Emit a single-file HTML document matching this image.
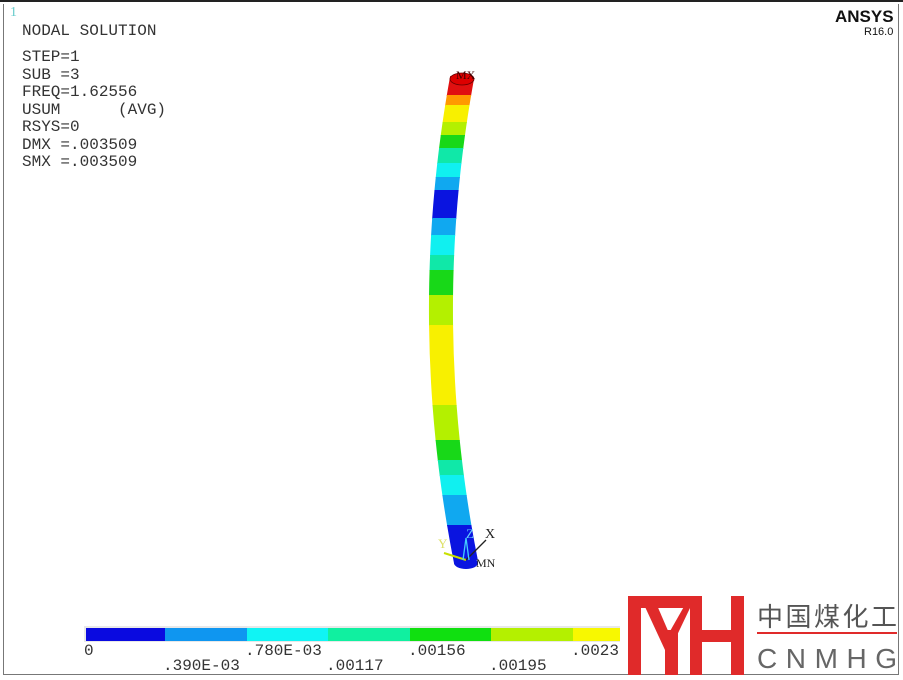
<!DOCTYPE html>
<html><head><meta charset="utf-8"><style>
html,body{margin:0;padding:0;background:#fff;}
body{width:903px;height:680px;position:relative;overflow:hidden;font-family:"Liberation Mono",monospace;}
.t{position:absolute;font-size:16px;color:#333;white-space:pre;line-height:1;}
</style></head><body>
<div style="position:absolute;left:0;top:0;width:903px;height:2px;background:#222"></div>
<div style="position:absolute;left:3px;top:4px;width:894px;height:670px;border:1px solid #777;border-top:none"></div>
<div class="t" style="left:10px;top:6px;color:#6cc;font-family:'Liberation Serif',serif;font-size:14px">1</div>
<div class="t" style="left:22px;top:23px">NODAL SOLUTION</div>
<div class="t" style="left:22px;top:49px">STEP=1</div>
<div class="t" style="left:22px;top:67px">SUB =3</div>
<div class="t" style="left:22px;top:84px">FREQ=1.62556</div>
<div class="t" style="left:22px;top:102px">USUM      (AVG)</div>
<div class="t" style="left:22px;top:119px">RSYS=0</div>
<div class="t" style="left:22px;top:137px">DMX =.003509</div>
<div class="t" style="left:22px;top:154px">SMX =.003509</div>
<div class="t" style="left:835px;top:8px;font-family:'Liberation Sans',sans-serif;font-weight:bold;font-size:17px;color:#111">ANSYS</div>
<div class="t" style="left:864px;top:27px;font-family:'Liberation Sans',sans-serif;font-size:11px;color:#111">R16.0</div>

<svg width="903" height="680" style="position:absolute;left:0;top:0">
<defs>
<path id="c" d="M462,78 Q418,320 466,562" fill="none" stroke-width="24"/>
</defs>
<clipPath id="b1"><rect x="400" y="60" width="100" height="36"/></clipPath>
<clipPath id="b2"><rect x="400" y="95" width="100" height="11"/></clipPath>
<clipPath id="b3"><rect x="400" y="105" width="100" height="18"/></clipPath>
<clipPath id="b4"><rect x="400" y="122" width="100" height="14"/></clipPath>
<clipPath id="b5"><rect x="400" y="135" width="100" height="14"/></clipPath>
<clipPath id="b6"><rect x="400" y="148" width="100" height="16"/></clipPath>
<clipPath id="b7"><rect x="400" y="163" width="100" height="15"/></clipPath>
<clipPath id="b8"><rect x="400" y="177" width="100" height="14"/></clipPath>
<clipPath id="b9"><rect x="400" y="190" width="100" height="29"/></clipPath>
<clipPath id="b10"><rect x="400" y="218" width="100" height="18"/></clipPath>
<clipPath id="b11"><rect x="400" y="235" width="100" height="21"/></clipPath>
<clipPath id="b12"><rect x="400" y="255" width="100" height="16"/></clipPath>
<clipPath id="b13"><rect x="400" y="270" width="100" height="26"/></clipPath>
<clipPath id="b14"><rect x="400" y="295" width="100" height="31"/></clipPath>
<clipPath id="b15"><rect x="400" y="325" width="100" height="81"/></clipPath>
<clipPath id="b16"><rect x="400" y="405" width="100" height="36"/></clipPath>
<clipPath id="b17"><rect x="400" y="440" width="100" height="21"/></clipPath>
<clipPath id="b18"><rect x="400" y="460" width="100" height="16"/></clipPath>
<clipPath id="b19"><rect x="400" y="475" width="100" height="21"/></clipPath>
<clipPath id="b20"><rect x="400" y="495" width="100" height="31"/></clipPath>
<clipPath id="b21"><rect x="400" y="525" width="100" height="60"/></clipPath>
<use href="#c" stroke="#e01010" clip-path="url(#b1)"/>
<use href="#c" stroke="#ff9a00" clip-path="url(#b2)"/>
<use href="#c" stroke="#f8f000" clip-path="url(#b3)"/>
<use href="#c" stroke="#b4f000" clip-path="url(#b4)"/>
<use href="#c" stroke="#18d818" clip-path="url(#b5)"/>
<use href="#c" stroke="#10e8a8" clip-path="url(#b6)"/>
<use href="#c" stroke="#10f0f0" clip-path="url(#b7)"/>
<use href="#c" stroke="#10a8f0" clip-path="url(#b8)"/>
<use href="#c" stroke="#0a14e0" clip-path="url(#b9)"/>
<use href="#c" stroke="#10a8f0" clip-path="url(#b10)"/>
<use href="#c" stroke="#10f0f0" clip-path="url(#b11)"/>
<use href="#c" stroke="#10e8a8" clip-path="url(#b12)"/>
<use href="#c" stroke="#18d818" clip-path="url(#b13)"/>
<use href="#c" stroke="#b4f000" clip-path="url(#b14)"/>
<use href="#c" stroke="#f8f000" clip-path="url(#b15)"/>
<use href="#c" stroke="#b4f000" clip-path="url(#b16)"/>
<use href="#c" stroke="#18d818" clip-path="url(#b17)"/>
<use href="#c" stroke="#10e8a8" clip-path="url(#b18)"/>
<use href="#c" stroke="#10f0f0" clip-path="url(#b19)"/>
<use href="#c" stroke="#10a8f0" clip-path="url(#b20)"/>
<use href="#c" stroke="#0a14e0" clip-path="url(#b21)"/>
<ellipse cx="462" cy="79" rx="12" ry="6" fill="#d00" stroke="#600" stroke-width="0.8"/>
<ellipse cx="466" cy="563" rx="12" ry="6" fill="#0a14e0"/>
<line x1="444" y1="553" x2="466" y2="560" stroke="#c8e000" stroke-width="2"/>
<line x1="466" y1="560" x2="486" y2="540" stroke="#222" stroke-width="1.3"/>
<path d="M463,560 L466,538 L469,560" fill="none" stroke="#4cf" stroke-width="1.3"/>
<text x="438" y="548" font-family="Liberation Serif" font-size="13" fill="#dde066">Y</text>
<text x="466" y="538" font-family="Liberation Serif" font-size="13" fill="#6cf">Z</text>
<text x="485" y="538" font-family="Liberation Serif" font-size="14" fill="#222">X</text>
<text x="476" y="567" font-family="Liberation Serif" font-size="12" fill="#222">MN</text>
<text x="456" y="79" font-family="Liberation Serif" font-size="12" fill="#400">MX</text>

<rect x="84" y="626" width="600" height="16" fill="#e8e8e8"/>
<rect x="86" y="628" width="79" height="13" fill="#0a0ae0"/>
<rect x="165" y="628" width="82" height="13" fill="#0f96f0"/>
<rect x="247" y="628" width="81" height="13" fill="#10f4f4"/>
<rect x="328" y="628" width="82" height="13" fill="#10f0a0"/>
<rect x="410" y="628" width="81" height="13" fill="#10e010"/>
<rect x="491" y="628" width="82" height="13" fill="#b4f000"/>
<rect x="573" y="628" width="100" height="13" fill="#f8f800"/>
<g font-family="Liberation Mono" font-size="16" fill="#333">
<text x="84" y="655">0</text>
<text x="245" y="655">.780E-03</text>
<text x="408" y="655">.00156</text>
<text x="571" y="655">.00233</text>
<text x="163" y="670">.390E-03</text>
<text x="326" y="670">.00117</text>
<text x="489" y="670">.00195</text>
</g>
<rect x="620" y="592" width="277" height="82" fill="#fff"/>
<g fill="#e02a2a">
<rect x="628" y="596" width="13" height="79"/>
<rect x="628" y="596" width="62" height="12"/>
<polygon points="640,596 653,596 672,640 665,650"/>
<polygon points="690,596 690,608 670,650 665,640"/>
<rect x="665" y="630" width="13" height="45"/>
<rect x="690" y="596" width="12" height="79"/>
<rect x="731" y="596" width="13" height="79"/>
<rect x="690" y="630" width="54" height="12"/>
</g>
<rect x="757" y="632" width="140" height="2" fill="#e02a2a"/>
<text x="757" y="626" font-family="Noto Sans CJK SC, sans-serif" font-size="26" fill="#555" textLength="140">中国煤化工</text>
<text x="757" y="668" font-family="Liberation Sans, sans-serif" font-size="28" fill="#666" textLength="140" lengthAdjust="spacing">CNMHG</text>
</svg>
</body></html>
